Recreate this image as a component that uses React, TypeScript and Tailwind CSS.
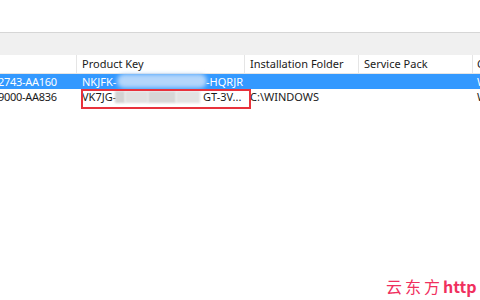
import React from 'react';

const font = { fontFamily: '"Noto Sans", "Noto Sans CJK SC", sans-serif' };

function Blur({ className }: { className: string }) {
  return <span className={'absolute ' + className} />;
}

export default function App() {
  return (
    <div className="relative w-[480px] h-[300px] overflow-hidden bg-white text-[11px] text-[#1a1a1a]" style={font}>
      <div className="h-[32px]" />
      <div className="h-[23px] border-t border-[#d6d6d6] bg-[#f0f0f0]" />
      {/* header */}
      <div className="flex h-[19px] border-b border-[#e5e5e5] bg-white">
        <div className="w-[77px] shrink-0 border-r border-[#e5e5e5]" />
        <div className="w-[168px] shrink-0 border-r border-[#e5e5e5] pl-[5px] leading-[18px]">Product Key</div>
        <div className="w-[114px] shrink-0 border-r border-[#e5e5e5] pl-[5px] leading-[18px]">Installation Folder</div>
        <div className="w-[114px] shrink-0 border-r border-[#e5e5e5] pl-[5px] leading-[18px]">Service Pack</div>
        <div className="flex-1 pl-[4px] leading-[18px]">C</div>
      </div>
      {/* selected row */}
      <div className="flex h-[15px] bg-[#3399ff] text-white leading-[15px]">
        <div className="w-[77px] shrink-0 overflow-hidden whitespace-nowrap tracking-[-0.3px]">
          <span className="ml-[-2px]">2743-AA160</span>
        </div>
        <div className="relative w-[168px] shrink-0 whitespace-nowrap pl-[5px]">
          NKJFK-
          <Blur className="left-[40px] top-[0px] w-[90px] h-[14px] rounded-full bg-[#b4d6fb] blur-[2px]" />
          <span className="absolute left-[129px]">-HQRJR</span>
        </div>
        <div className="w-[114px] shrink-0" />
        <div className="w-[114px] shrink-0" />
        <div className="flex-1 pl-[4px]">W</div>
      </div>
      {/* second row */}
      <div className="flex h-[16px] leading-[16px]">
        <div className="w-[77px] shrink-0 overflow-hidden whitespace-nowrap tracking-[-0.3px]">
          <span className="ml-[-2px]">9000-AA836</span>
        </div>
        <div className="relative w-[168px] shrink-0 whitespace-nowrap pl-[5px]">
          VK7JG-
          <Blur className="left-[38px] top-[2px] w-[10px] h-[12px] bg-[#d2d2d2] blur-[1px]" />
          <Blur className="left-[48px] top-[2px] w-[23px] h-[12px] bg-[#e0e0e0] blur-[1px]" />
          <Blur className="left-[71px] top-[2px] w-[28px] h-[12px] bg-[#d6d6d6] blur-[1px]" />
          <Blur className="left-[99px] top-[2px] w-[24px] h-[12px] bg-[#e2e2e2] blur-[1px]" />
          <span className="absolute left-[126px]">GT-3V...</span>
        </div>
        <div className="w-[114px] shrink-0 pl-[5px]">C:\WINDOWS</div>
        <div className="w-[114px] shrink-0" />
        <div className="flex-1 pl-[4px]">W</div>
      </div>
      {/* red highlight box */}
      <div className="absolute left-[81px] top-[89px] w-[170px] h-[20px] border-2 border-[#e8323c]" />
      {/* watermark */}
      <div className="absolute left-[386px] top-[274px] whitespace-nowrap text-[16px] font-bold text-[#f0305e]" style={{ fontFamily: '"Noto Sans CJK SC", "DejaVu Sans Mono", monospace' }}>
        <span className="font-normal tracking-[3px]">云东方</span>http
      </div>
    </div>
  );
}
